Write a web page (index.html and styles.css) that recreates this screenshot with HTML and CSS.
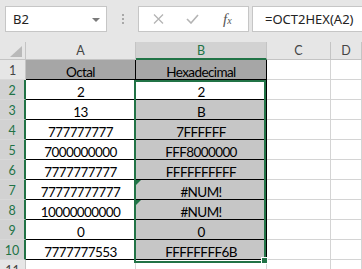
FILE: index.html
```html
<!DOCTYPE html>
<html>
<head>
  <meta charset="UTF-8">
  <title>OCT2HEX</title>
  <link rel="stylesheet" href="styles.css">
</head>
<body>
  <div class="toolbar">
    <div class="namebox">
      <span>B2</span>
      <svg class="caret" width="8" height="4" viewBox="0 0 8 4"><path d="M0 0H8L4 4Z" fill="#7a7a7a"/></svg>
    </div>
    <div class="grip"><i></i><i></i><i></i></div>
    <div class="fxbox">
      <svg width="11" height="10" viewBox="0 0 11 10"><path d="M1 0.5L10 9.5M10 0.5L1 9.5" stroke="#b4b4b4" stroke-width="1.3" fill="none"/></svg>
      <svg width="13" height="10" viewBox="0 0 13 10"><path d="M1 5L5 9L12 1" stroke="#b4b4b4" stroke-width="1.6" fill="none"/></svg>
      <span class="fx">f<sub>x</sub></span>
    </div>
    <div class="formula">=OCT2HEX(A2)</div>
  </div>

  <div class="sheet">
    <div class="hd corner"><svg width="12" height="11" viewBox="0 0 12 11"><path d="M12 0V11H0Z" fill="#b9b9b9"/></svg></div>
    <div class="hd col">A</div>
    <div class="hd col sel">B</div>
    <div class="hd col">C</div>
    <div class="hd col">D</div>

    <div class="hd row">1</div>
    <div class="cell t title">Octal</div>
    <div class="cell t title">Hexadecimal</div>
    <div class="cell"></div>
    <div class="cell"></div>

    <div class="hd row sel">2</div>
    <div class="cell t">2</div>
    <div class="cell t">2</div>
    <div class="cell"></div>
    <div class="cell"></div>

    <div class="hd row sel">3</div>
    <div class="cell t">13</div>
    <div class="cell t hl">B</div>
    <div class="cell"></div>
    <div class="cell"></div>

    <div class="hd row sel">4</div>
    <div class="cell t">777777777</div>
    <div class="cell t hl">7FFFFFF</div>
    <div class="cell"></div>
    <div class="cell"></div>

    <div class="hd row sel">5</div>
    <div class="cell t">7000000000</div>
    <div class="cell t hl">FFF8000000</div>
    <div class="cell"></div>
    <div class="cell"></div>

    <div class="hd row sel">6</div>
    <div class="cell t">7777777777</div>
    <div class="cell t hl">FFFFFFFFFF</div>
    <div class="cell"></div>
    <div class="cell"></div>

    <div class="hd row sel">7</div>
    <div class="cell t">77777777777</div>
    <div class="cell t hl err">#NUM!</div>
    <div class="cell"></div>
    <div class="cell"></div>

    <div class="hd row sel">8</div>
    <div class="cell t">10000000000</div>
    <div class="cell t hl err">#NUM!</div>
    <div class="cell"></div>
    <div class="cell"></div>

    <div class="hd row sel">9</div>
    <div class="cell t">0</div>
    <div class="cell t hl">0</div>
    <div class="cell"></div>
    <div class="cell"></div>

    <div class="hd row sel">10</div>
    <div class="cell t">7777777553</div>
    <div class="cell t hl">FFFFFFFF6B</div>
    <div class="cell"></div>
    <div class="cell"></div>

    <div class="hd row">11</div>
    <div class="cell"></div>
    <div class="cell"></div>
    <div class="cell"></div>
    <div class="cell"></div>

    <div class="selection"><span class="handle"></span></div>
  </div>
</body>
</html>
```

FILE: styles.css
```css
* {
  box-sizing: border-box;
}
body {
  margin: 0;
  background-color: #e6e6e6;
  overflow: hidden;
  font-family: Lato, "Liberation Sans", sans-serif;
}
.toolbar {
  height: 42px;
  padding-top: 6px;
  display: flex;
  align-items: flex-start;
  font-family: "Noto Sans", sans-serif;
  font-size: 13px;
  color: #222;
}
.namebox {
  margin-left: 5px;
  width: 102px;
  height: 26px;
  background-color: #fff;
  border: 1px solid #c6c6c6;
  display: flex;
  align-items: center;
  justify-content: space-between;
  padding: 0 6px 0 7px;
}
.caret {
  margin-top: 1px;
}
.grip {
  width: 31px;
  height: 26px;
  display: flex;
  flex-direction: column;
  align-items: center;
  justify-content: center;
  gap: 2px;
}
.grip i {
  width: 2px;
  height: 2px;
  background-color: #a8a8a8;
}
.fxbox {
  width: 111px;
  height: 26px;
  background-color: #fff;
  border: 1px solid #c6c6c6;
  display: flex;
  align-items: center;
  padding-left: 14px;
  gap: 22px;
}
.fx {
  margin-left: 2px;
  font-family: "Liberation Serif", serif;
  font-style: italic;
  font-size: 15px;
  color: #555;
}
.fx sub {
  font-size: 10px;
  vertical-align: 0;
}
.formula {
  margin-left: 3px;
  flex: 1;
  height: 26px;
  background-color: #fff;
  border: 1px solid #c6c6c6;
  border-right: none;
  line-height: 24px;
  padding-left: 12px;
}

.sheet {
  position: relative;
  display: grid;
  grid-template-columns: 26px 110px 131px 64px 1fr;
  grid-template-rows: 18px repeat(11, 20px);
  background-color: #fff;
}
.hd {
  background-color: #e6e6e6;
  border-right: 1px solid #c4c4c4;
  border-bottom: 1px solid #c4c4c4;
  color: #444;
  font-size: 12.5px;
  text-align: center;
}
.hd.col {
  line-height: 17px;
}
.hd.row {
  line-height: 16px;
  padding-top: 3px;
  border-bottom-color: #d8d8d8;
}
.hd.sel {
  background-color: #d2d2d2;
  color: #217346;
}
.hd.col.sel {
  border-bottom: 2px solid #217346;
}
.hd.row.sel {
  border-right: 2px solid #217346;
}
.corner {
  display: flex;
  align-items: flex-end;
  justify-content: flex-end;
  padding: 0 3px 2px 0;
}
.cell {
  position: relative;
  border-right: 1px solid #d4d4d4;
  border-bottom: 1px solid #d4d4d4;
  font-size: 13.5px;
  letter-spacing: -0.6px;
  line-height: 16px;
  padding-top: 4px;
  text-align: center;
  color: #000;
}
.cell.t {
  border-color: #000;
}
.cell.title {
  background-color: #a6a6a6;
}
.cell.hl {
  background-color: #c6c6c6;
}
.cell.err::before {
  content: "";
  position: absolute;
  top: 0;
  left: 0;
  border-top: 5px solid #217346;
  border-right: 5px solid transparent;
}
.selection {
  position: absolute;
  left: 134px;
  top: 38px;
  width: 132px;
  height: 183px;
  border: 2px solid #217346;
  pointer-events: none;
}
.handle {
  position: absolute;
  left: 125px;
  top: 175px;
  width: 7px;
  height: 7px;
  background-color: #217346;
  border: 1px solid #fff;
}
```
